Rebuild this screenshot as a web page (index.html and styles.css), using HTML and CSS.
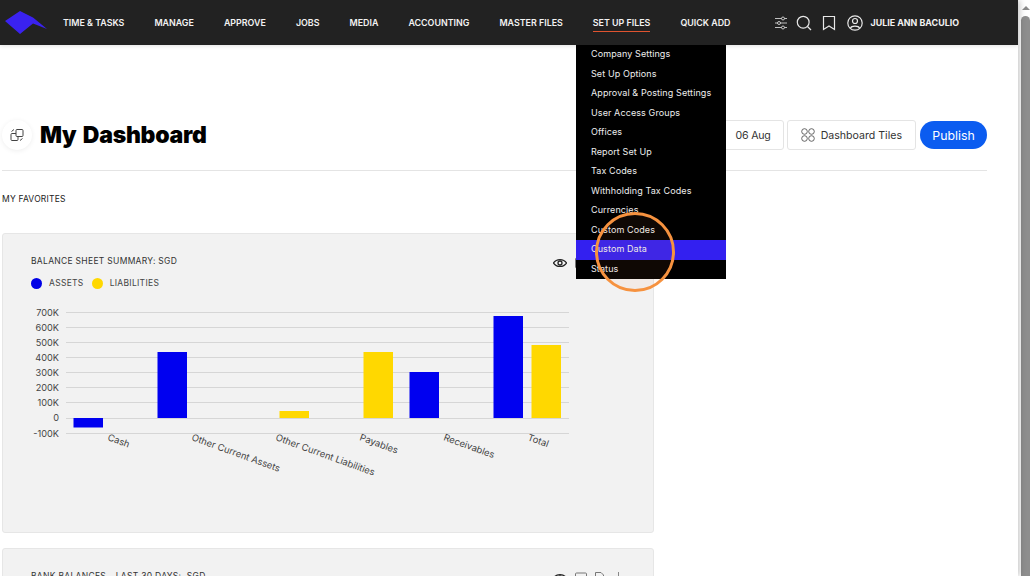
FILE: index.html
```html
<!DOCTYPE html>
<html lang="en">
<head>
<meta charset="utf-8">
<title>My Dashboard</title>
<link rel="stylesheet" href="styles.css">
</head>
<body>
<div class="page">
  <header class="nav">
    <svg class="logo" viewBox="0 0 42 24" width="42" height="24"><path class="logo-fill" d="M0 10 15 0 28 6.500 42 18 28 12.500 15 23Z"/></svg>
    <ul class="nav-list">
      <li>TIME &amp; TASKS</li>
      <li>MANAGE</li>
      <li>APPROVE</li>
      <li>JOBS</li>
      <li>MEDIA</li>
      <li>ACCOUNTING</li>
      <li>MASTER FILES</li>
      <li class="is-active">SET UP FILES</li>
      <li>QUICK ADD</li>
    </ul>
    <div class="nav-tools">
      <svg class="tool tool-sliders" viewBox="0 0 14 14" width="14" height="14"><path d="M1 2.500H13M1 7H13M1 11.500H13"/><circle cx="9" cy="2.500" r="1.500"/><circle cx="5" cy="7" r="1.500"/><circle cx="9" cy="11.500" r="1.500"/></svg>
      <svg class="tool tool-search" viewBox="0 0 16 16" width="16" height="16"><circle cx="7.200" cy="7.200" r="5.900"/><path d="M11.500 11.500 15 15"/></svg>
      <svg class="tool tool-mark" viewBox="0 0 14 16" width="14" height="16"><path d="M1.500 1.500H12.500V14.500L7 11 1.500 14.500Z"/></svg>
      <svg class="tool tool-user" viewBox="0 0 16 16" width="16" height="16"><circle cx="8" cy="8" r="7.200"/><circle cx="8" cy="6" r="2.500"/><path d="M3.500 13C4.500 10.500 11.500 10.500 12.500 13"/></svg>
      <span class="user-name">JULIE ANN BACULIO</span>
    </div>
  </header>

  <nav class="menu">
    <a>Company Settings</a>
    <a>Set Up Options</a>
    <a>Approval &amp; Posting Settings</a>
    <a>User Access Groups</a>
    <a>Offices</a>
    <a>Report Set Up</a>
    <a>Tax Codes</a>
    <a>Withholding Tax Codes</a>
    <a>Currencies</a>
    <a>Custom Codes</a>
    <a class="is-hover">Custom Data</a>
    <a>Status</a>
  </nav>
  <div class="ring"></div>

  <main class="content">
    <section class="title-row">
      <div class="title-left">
        <span class="round-btn">
          <svg class="swap" viewBox="0 0 14 14" width="14" height="14"><rect x="1" y="5.500" width="7" height="7" rx="1"/><rect x="6" y="1.500" width="7" height="7" rx="1"/><path d="M1.500 3.500 4 1.500M10 12.500 12.500 10.500"/></svg>
        </span>
        <h1>My Dashboard</h1>
      </div>
      <div class="actions">
        <button class="btn btn-date">06 Aug</button>
        <button class="btn btn-tiles">
          <svg class="tiles" viewBox="0 0 14 14" width="14" height="14"><circle cx="3.500" cy="3.500" r="2.800"/><circle cx="10.500" cy="3.500" r="2.800"/><circle cx="3.500" cy="10.500" r="2.800"/><circle cx="10.500" cy="10.500" r="2.800"/></svg>
          Dashboard Tiles
        </button>
        <button class="btn-publish">Publish</button>
      </div>
    </section>

    <p class="favorites">MY FAVORITES</p>

    <section class="card card-tall">
      <div class="card-head">
        <h2>BALANCE SHEET SUMMARY: SGD</h2>
        <div class="card-tools">
          <svg class="ico-eye" viewBox="0 0 14 10" width="14" height="10"><path d="M.5 5C3.500.5 10.500.5 13.500 5 10.500 9.500 3.500 9.500.5 5Z"/><circle cx="7" cy="5" r="2"/></svg>
          <svg class="ico-line" viewBox="0 0 12 12" width="12" height="12"><rect x=".5" y="1" width="11" height="10" rx="1"/><path d="M.5 4.500H11.500"/></svg>
          <svg class="ico-line" viewBox="0 0 9 12" width="9" height="12"><path d="M.5.500H6L8.500 3V11.500H.5Z"/></svg>
          <span class="ico-bar"></span>
        </div>
      </div>
      <ul class="legend">
        <li><span class="dot dot-blue"></span>ASSETS</li>
        <li><span class="dot dot-yellow"></span>LIABILITIES</li>
      </ul>
      <svg class="chart" viewBox="3 300 650 190" width="650" height="190">
        <g class="grid">
          <path d="M66 312.500H569M66 327.500H569M66 342.500H569M66 357.500H569M66 372.500H569M66 387.500H569M66 402.500H569M66 418.500H569M66 433.500H569"/>
        </g>
        <g class="axis-y">
          <text x="59" y="315.500">700K</text>
          <text x="59" y="330.500">600K</text>
          <text x="59" y="345.500">500K</text>
          <text x="59" y="360.500">400K</text>
          <text x="59" y="375.500">300K</text>
          <text x="59" y="390.500">200K</text>
          <text x="59" y="405.500">100K</text>
          <text x="59" y="420.500">0</text>
          <text x="59" y="436.500">-100K</text>
        </g>
        <g class="bars-blue">
          <rect x="73.500" y="418" width="29.500" height="9.500"/>
          <rect x="157.500" y="352" width="29.500" height="66"/>
          <rect x="409.500" y="372" width="29.500" height="46"/>
          <rect x="493.500" y="316" width="29.500" height="102"/>
        </g>
        <g class="bars-yellow">
          <rect x="279.500" y="411" width="29.500" height="7"/>
          <rect x="363.500" y="352" width="29.500" height="66"/>
          <rect x="531.500" y="345" width="29.500" height="73"/>
        </g>
        <g class="axis-x">
          <text transform="translate(107 440) rotate(20)">Cash</text>
          <text transform="translate(191 440) rotate(20)">Other Current Assets</text>
          <text transform="translate(275 440) rotate(20)">Other Current Liabilities</text>
          <text transform="translate(359 440) rotate(20)">Payables</text>
          <text transform="translate(443 440) rotate(20)">Receivables</text>
          <text transform="translate(527 440) rotate(20)">Total</text>
        </g>
      </svg>
    </section>

    <section class="card">
      <div class="card-head">
        <h2>BANK BALANCES - LAST 30 DAYS:&nbsp; SGD</h2>
        <div class="card-tools">
          <svg class="ico-eye" viewBox="0 0 14 10" width="14" height="10"><path d="M.5 5C3.500.5 10.500.5 13.500 5 10.500 9.500 3.500 9.500.5 5Z"/><circle cx="7" cy="5" r="2"/></svg>
          <svg class="ico-line" viewBox="0 0 12 12" width="12" height="12"><rect x=".5" y="1" width="11" height="10" rx="1"/><path d="M.5 4.500H11.500"/></svg>
          <svg class="ico-line" viewBox="0 0 9 12" width="9" height="12"><path d="M.5.500H6L8.500 3V11.500H.5Z"/></svg>
          <span class="ico-bar"></span>
        </div>
      </div>
    </section>
  </main>
</div>
<aside class="scrollbar">
  <span class="scroll-arrow"></span>
  <span class="scroll-thumb"></span>
</aside>
</body>
</html>
```
FILE: styles.css
```css
* { box-sizing: border-box; }
html, body { margin: 0; height: 576px; overflow: hidden; }
body {
  display: flex;
  width: 1033px;
  background: #fff;
  font-family: "Inter", "Liberation Sans", sans-serif;
  color: #222;
}
.page {
  position: relative;
  width: 1018px;
  height: 576px;
  overflow: hidden;
  flex: none;
  box-shadow: 2px 0 6px rgba(0, 0, 0, .22);
  z-index: 1;
}
.nav {
  display: flex;
  align-items: center;
  height: 45px;
  padding-left: 5px;
  background: #222;
  box-shadow: 0 1px 4px rgba(0, 0, 0, .12);
  color: #f2f2f2;
}
.logo { flex: none; margin: 1px 16px 0 0; }
.logo-fill { fill: #3a22f0; }
.nav-list {
  display: flex;
  gap: 30px;
  list-style: none;
  margin: 0;
  padding: 0;
  font-size: 8.900px;
  line-height: 11px;
  font-weight: 600;
}
.nav-list li { position: relative; white-space: nowrap; }
.is-active::after {
  content: "";
  position: absolute;
  left: 0;
  right: 0;
  top: 14px;
  height: 1px;
  background: #e0532f;
}
.nav-tools { display: flex; align-items: center; margin-left: 43px; }
.tool { fill: none; stroke: #e8e8e8; stroke-width: 1.200; flex: none; }
.tool-sliders { stroke-width: .8; margin-right: 8px; }
.tool-sliders circle { fill: #222; }
.tool-search { margin-right: 10px; }
.tool-mark { margin-right: 11px; }
.tool-user { margin-right: 8px; }
.user-name { font-size: 8.900px; font-weight: 700; white-space: nowrap; }

.menu {
  position: absolute;
  left: 576px;
  top: 45px;
  width: 150px;
  height: 234px;
  display: flex;
  flex-direction: column;
  background: #000;
  z-index: 3;
}
.menu a {
  display: flex;
  align-items: center;
  height: 19.500px;
  padding: 0 0 2px 15px;
  color: #eee;
  font-size: 9px;
  letter-spacing: .1px;
  white-space: nowrap;
}
.menu .is-hover { background: #3320f0; }
.ring {
  position: absolute;
  left: 595px;
  top: 212px;
  width: 80px;
  height: 80px;
  border: 3px solid #f6923f;
  border-radius: 50%;
  background: rgba(255, 140, 60, .06);
  z-index: 4;
}

.content { padding: 75px 31px 0 2px; }
.title-row {
  display: flex;
  justify-content: space-between;
  align-items: center;
  height: 51px;
  padding-bottom: 20px;
  border-bottom: 1px solid #e4e4e4;
}
.title-left { display: flex; align-items: center; gap: 8px; }
.round-btn {
  display: flex;
  align-items: center;
  justify-content: center;
  width: 30px;
  height: 30px;
  border-radius: 50%;
  background: #fff;
  box-shadow: 0 1px 5px rgba(0, 0, 0, .07);
}
.swap { fill: #fff; stroke: #444; stroke-width: 1; }
h1 {
  margin: 0;
  font-size: 23px;
  font-weight: 900;
  letter-spacing: -.25px;
  word-spacing: 2px;
  color: #000;
}
.actions { display: flex; align-items: center; gap: 3px; }
.btn {
  display: flex;
  align-items: center;
  gap: 6px;
  height: 30px;
  border: 1px solid #e4e4e4;
  border-radius: 3px;
  background: #fff;
  font: 400 10.600px "Inter", "Liberation Sans", sans-serif;
  color: #333;
}
.btn-date { padding: 0 12px 0 60px; letter-spacing: -.2px; }
.btn-tiles { padding: 0 13px 0 13px; }
.tiles { fill: none; stroke: #555; stroke-width: .9; }
.btn-publish {
  height: 28px;
  width: 67px;
  margin-left: 1px;
  border: 0;
  border-radius: 14px;
  background: #0b5cf0;
  color: #fff;
  font: 400 12.300px "Inter", "Liberation Sans", sans-serif;
}
.favorites {
  margin: 23px 0 28px;
  font-size: 8.500px;
  line-height: 11px;
  letter-spacing: .2px;
  color: #222;
}

.card {
  width: 652px;
  min-height: 60px;
  margin-bottom: 15px;
  padding: 22px 28px 0;
  border: 1px solid #e6e6e6;
  border-radius: 3px;
  background: #f2f2f2;
}
.card-tall { height: 300px; position: relative; }
.card-head {
  display: flex;
  justify-content: space-between;
  align-items: flex-start;
  height: 20px;
}
h2 {
  margin: 0;
  font-size: 8.500px;
  line-height: 11px;
  font-weight: 400;
  color: #333;
  letter-spacing: .3px;
}
.card-tools {
  display: flex;
  align-items: center;
  gap: 8px;
  margin: 1px 6px 0 0;
}
.ico-eye { fill: none; stroke: #222; stroke-width: 1.300; }
.ico-line { fill: none; stroke: #777; stroke-width: 1; }
.ico-bar { width: 1px; height: 12px; margin-left: 6px; background: #888; }

.legend {
  display: flex;
  gap: 8px;
  list-style: none;
  margin: 2px 0 0;
  padding: 0;
  font-size: 8.500px;
  line-height: 11px;
  color: #444;
  letter-spacing: .3px;
}
.legend li { display: flex; align-items: center; gap: 7px; }
.dot { width: 11px; height: 11px; border-radius: 50%; }
.dot-blue { background: #0000e6; }
.dot-yellow { background: #ffd800; }
.chart { display: block; margin: 11px 0 0 -28px; }
.grid path { stroke: #d6d6d6; stroke-width: 1; fill: none; }
.axis-y text { font-size: 9.200px; fill: #444; text-anchor: end; }
.axis-x text { font-size: 9.400px; fill: #444; }
.bars-blue rect { fill: #0000f0; }
.bars-yellow rect { fill: #ffd800; }

.scrollbar {
  position: relative;
  width: 15px;
  height: 576px;
  display: flex;
  flex-direction: column;
  align-items: center;
  background: #fff;
}
.scroll-arrow {
  width: 0;
  height: 0;
  margin-top: 6px;
  border-left: 4px solid transparent;
  border-right: 4px solid transparent;
  border-bottom: 4px solid #8a8a8a;
}
.scroll-thumb {
  width: 9px;
  flex: 1;
  margin-top: 6px;
  border-radius: 5px 5px 0 0;
  background: #8e8e8e;
}
```
